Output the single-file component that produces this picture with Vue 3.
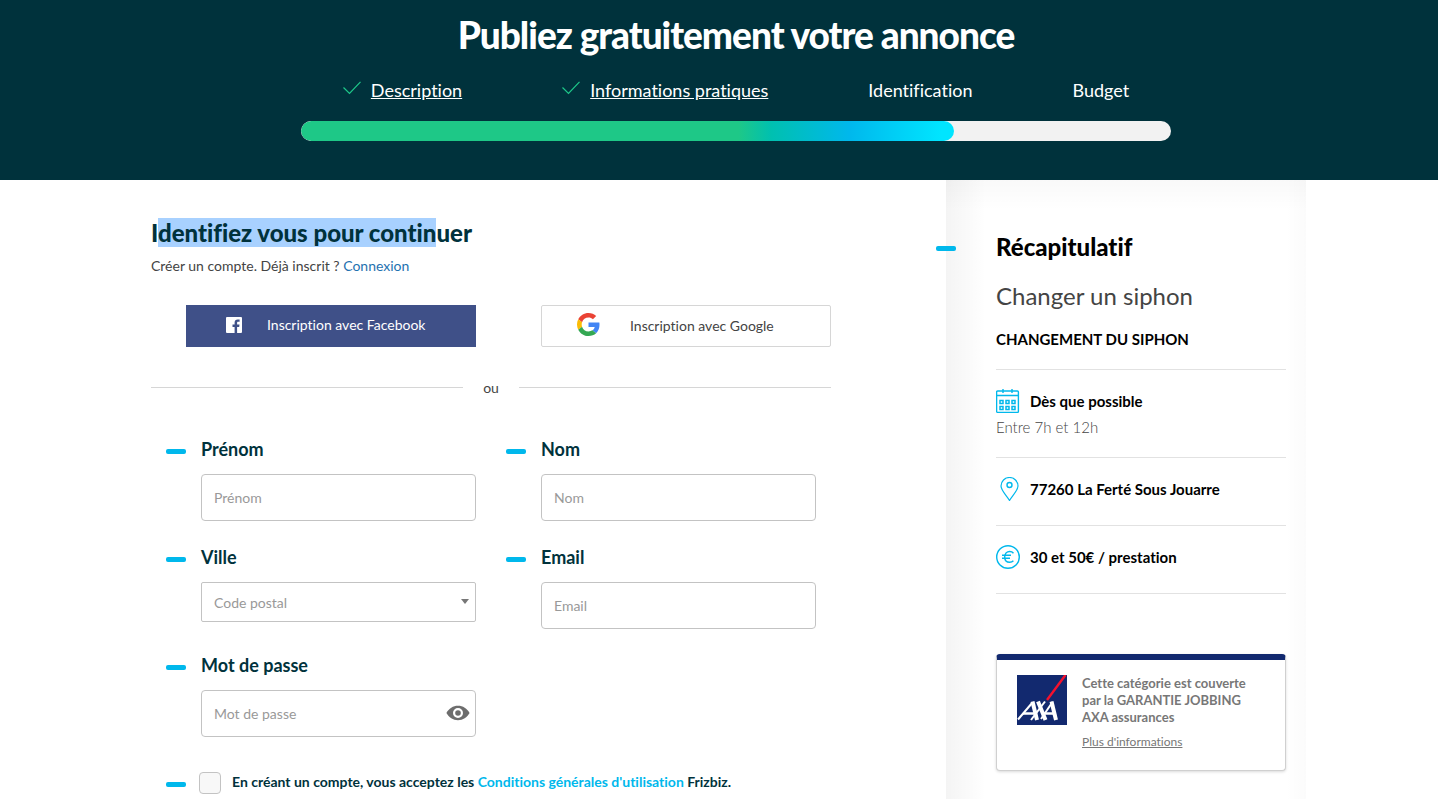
<script setup>
import { ref } from 'vue'

const steps = [
  { label: 'Description', done: true },
  { label: 'Informations pratiques', done: true },
  { label: 'Identification', done: false },
  { label: 'Budget', done: false }
]
const progress = 75
const showPassword = ref(false)
</script>

<template>
  <div class="page">
    <header class="hero">
      <h1>Publiez gratuitement votre annonce</h1>
      <ol class="steps">
        <li v-for="s in steps" :key="s.label">
          <svg v-if="s.done" class="check" viewBox="0 0 18 14" aria-hidden="true">
            <path d="M.5 6.5 6.500 12.500 17.500 .8" />
          </svg>
          <a v-if="s.done" href="#">{{ s.label }}</a>
          <span v-else>{{ s.label }}</span>
        </li>
      </ol>
      <div class="bar"><div class="fill" :style="{ width: progress + '%' }"></div></div>
    </header>

    <div class="shell">
      <main class="content">
        <h2>I<mark>dentifiez vous pour contin</mark>uer</h2>
        <p class="intro">Créer un compte. Déjà inscrit ? <a href="#">Connexion</a></p>

        <div class="social">
          <button type="button" class="facebook">
            <svg viewBox="0 0 16 16" aria-hidden="true">
              <path fill="#fff" d="M1 0h14a1 1 0 0 1 1 1v14a1 1 0 0 1-1 1h-3.900V9.900h2.100l.3-2.400h-2.400V6c0-.7.2-1.200 1.200-1.200h1.300V2.600c-.2 0-1-.1-1.900-.1-1.900 0-3.100 1.100-3.100 3.200v1.800H6.500v2.400h2.100V16H1a1 1 0 0 1-1-1V1a1 1 0 0 1 1-1z" />
            </svg>
            <span>Inscription avec Facebook</span>
          </button>
          <button type="button" class="google">
            <svg viewBox="0 0 48 48" aria-hidden="true">
              <path fill="#EA4335" d="M24 9.500c3.540 0 6.710 1.220 9.210 3.600l6.850-6.850C35.900 2.380 30.470 0 24 0 14.620 0 6.510 5.380 2.560 13.220l7.980 6.190C12.430 13.720 17.740 9.500 24 9.500z" />
              <path fill="#4285F4" d="M46.980 24.550c0-1.570-.15-3.090-.38-4.550H24v9.020h12.940c-.58 2.960-2.260 5.480-4.780 7.180l7.730 6c4.510-4.180 7.090-10.360 7.090-17.650z" />
              <path fill="#FBBC05" d="M10.530 28.590c-.48-1.450-.76-2.990-.76-4.590s.27-3.140.76-4.590l-7.980-6.190C.92 16.460 0 20.120 0 24s.92 7.540 2.560 10.780l7.970-6.190z" />
              <path fill="#34A853" d="M24 48c6.480 0 11.930-2.130 15.890-5.810l-7.730-6c-2.150 1.450-4.920 2.300-8.160 2.300-6.260 0-11.570-4.220-13.470-9.910l-7.980 6.190C6.510 42.620 14.620 48 24 48z" />
            </svg>
            <span>Inscription avec Google</span>
          </button>
        </div>

        <div class="or"><span>ou</span></div>

        <form @submit.prevent>
          <div class="fields">
            <div class="field">
              <label for="firstname">Prénom</label>
              <input id="firstname" type="text" placeholder="Prénom" />
            </div>
            <div class="field">
              <label for="lastname">Nom</label>
              <input id="lastname" type="text" placeholder="Nom" />
            </div>
            <div class="field">
              <label for="city">Ville</label>
              <div class="select">
                <select id="city"><option>Code postal</option></select>
                <svg viewBox="0 0 8 5" aria-hidden="true"><path d="M0 0h8L4 5z" fill="#777" /></svg>
              </div>
            </div>
            <div class="field">
              <label for="email">Email</label>
              <input id="email" type="email" placeholder="Email" />
            </div>
            <div class="field">
              <label for="password">Mot de passe</label>
              <div class="password">
                <input id="password" :type="showPassword ? 'text' : 'password'" placeholder="Mot de passe" />
                <button type="button" aria-label="Afficher le mot de passe" @click="showPassword = !showPassword">
                  <svg viewBox="0 0 24 16" aria-hidden="true">
                    <path fill="#6d6d6d" fill-rule="evenodd" d="M12 .8C17 .8 21 3.500 23.600 8 21 12.500 17 15.200 12 15.200S3 12.500.4 8C3 3.500 7 .8 12 .8zM12 3a5 5 0 1 0 0 10 5 5 0 0 0 0-10z" />
                    <circle cx="12" cy="8" r="2.800" fill="#6d6d6d" />
                  </svg>
                </button>
              </div>
            </div>
          </div>
          <div class="terms">
            <input id="terms" type="checkbox" />
            <label for="terms">En créant un compte, vous acceptez les <a href="#">Conditions générales d'utilisation</a> Frizbiz.</label>
          </div>
        </form>
      </main>

      <aside class="summary">
        <h2>Récapitulatif</h2>
        <p class="job">Changer un siphon</p>
        <h3>CHANGEMENT DU SIPHON</h3>
        <section class="when">
          <div class="line">
            <svg viewBox="0 0 24 24" fill="none" stroke="#00b8ec" aria-hidden="true">
              <rect x=".6" y="2" width="21.800" height="21.400" rx="1" stroke-width="1.400" />
              <path d="M.6 6.500h21.800M7 0v4M16 0v4" stroke-width="1.400" />
              <path d="M4 11.500h3v3H4zM10 11.500h3v3h-3zM16 11.500h3v3h-3zM4 17.500h3v3H4zM10 17.500h3v3h-3zM16 17.500h3v3h-3z" stroke-width="1.500" />
            </svg>
            <strong>Dès que possible</strong>
          </div>
          <p>Entre 7h et 12h</p>
        </section>
        <section>
          <div class="line">
            <svg viewBox="0 0 24 24" fill="none" stroke="#00b8ec" aria-hidden="true">
              <path d="M13.500 23.500C11 19 5 13.500 5 9a8.500 8.500 0 0 1 17 0c0 4.500-6 10-8.500 14.500z" stroke-width="1.200" />
              <circle cx="13.500" cy="8" r="2.500" stroke-width="1.400" />
            </svg>
            <strong>77260 La Ferté Sous Jouarre</strong>
          </div>
        </section>
        <section>
          <div class="line">
            <svg viewBox="0 0 24 24" fill="none" stroke="#00b8ec" aria-hidden="true">
              <circle cx="12" cy="12" r="11.300" stroke-width="1.400" />
              <path d="M17.500 8.200C16.500 7 15.200 6.500 13.700 6.500c-3 0-5 2.400-5 5.500s2 5.300 5 5.300c1.500 0 2.700-.5 3.700-1.600M6 10.300h9M6 13.300h8" stroke-width="1.400" />
            </svg>
            <strong>30 et 50€ / prestation</strong>
          </div>
        </section>

        <div class="insurance">
          <svg viewBox="0 0 50 50" role="img" aria-label="AXA">
            <path fill="#12296f" d="M0 0h50v50H0z" />
            <path d="M30 25 48.500 0" stroke="#f5112d" stroke-width="2.400" />
            <g fill="none" stroke="#fff">
              <path d="M1 44.500 15.500 27.500" stroke-width="2" />
              <path d="M15.500 26.500 20 45" stroke-width="4" />
              <path d="M6 38.500h13" stroke-width="2.500" />
              <path d="M21 26.500 28.500 45" stroke-width="4" />
              <path d="M28 26.500 14 45" stroke-width="2" />
              <path d="M24 44 35.500 27" stroke-width="2" />
              <path d="M34.500 26.500 39 45" stroke-width="4" />
              <path d="M26.500 38.500h11" stroke-width="2.500" />
            </g>
          </svg>
          <div>
            <strong>Cette catégorie est couverte par la GARANTIE JOBBING AXA assurances</strong>
            <a href="#">Plus d'informations</a>
          </div>
        </div>
      </aside>
    </div>
  </div>
</template>

<style>
body { margin: 0; background: #fff; }
</style>

<style scoped>
* { box-sizing: border-box; }
.page {
  min-height: 100vh;
  display: flex;
  flex-direction: column;
  font: 14px/20px Lato, "Liberation Sans", sans-serif;
  font-variant-ligatures: none;
  color: #444;
}
h1, h2, h3, p, ol { margin: 0; padding: 0; }
button, input, select { font: inherit; font-variant-ligatures: none; }
svg { display: block; flex: none; }

.hero {
  height: 180px;
  padding: 11px 0 0 34px;
  background: #00323c;
  color: #fff;
  display: flex;
  flex-direction: column;
  align-items: center;
}
h1 { font-size: 37px; line-height: 48px; font-weight: 900; letter-spacing: -1px; }
.steps {
  list-style: none;
  display: flex;
  gap: 100px;
  margin-top: 17px;
  font-size: 18px;
  line-height: 28px;
}
.steps li { display: flex; gap: 10px; }
.steps a { color: inherit; }
.check { width: 18px; height: 14px; margin-top: 5px; fill: none; stroke: #1dc98a; stroke-width: 1.2; }
.bar {
  width: 100%;
  max-width: 870px;
  height: 20px;
  margin-top: 17px;
  border-radius: 10px;
  background: #f2f2f2;
  overflow: hidden;
}
.fill {
  height: 100%;
  border-radius: 10px;
  background: linear-gradient(90deg, #1ec887 0%, #1ec887 67%, #00c0b0 72%, #00b8ec 84%, #00e5ff 98%);
}

.shell {
  flex: 1;
  width: 100%;
  max-width: 1174px;
  margin: 0 auto;
  padding-left: 4px;
  display: flex;
  justify-content: space-between;
}
.content { flex: 0 1 695px; padding: 38px 0 0 15px; }
.content h2 { font-size: 24px; line-height: 30px; font-weight: 900; color: #00323c; }
mark { background: #a8d1ff; color: inherit; }
.intro { margin-top: 8px; }
.intro a { color: #1f72b0; text-decoration: none; }

.social { display: flex; justify-content: space-between; margin: 29px 0 0 35px; }
.social button {
  flex: 0 1 290px;
  height: 42px;
  display: flex;
  align-items: center;
  border-radius: 2px;
}
.facebook { padding: 0 0 2px 40px; gap: 25px; border: 0; background: #3f5088; color: #fff; }
.social .facebook { border-radius: 0; }
.facebook svg { width: 16px; height: 16px; }
.google { padding: 0 0 0 35px; gap: 30px; border: 1px solid #d6d6d6; background: #fff; color: #444; }
.google svg { width: 23px; height: 23px; margin-bottom: 3px; }

.or { display: flex; gap: 20px; margin-top: 31px; }
.or::before, .or::after { content: ""; flex: 1; height: 1px; margin-top: 9px; background: #d6d6d6; }

form { margin-top: 38px; }
.fields { display: grid; grid-template-columns: 1fr 1fr; }
.field { position: relative; height: 108px; padding: 0 15px 0 50px; }
.field label { display: block; font-size: 18px; line-height: 26px; font-weight: 700; color: #00323c; }
.field::before, .terms::before, .summary h2::before {
  content: "";
  position: absolute;
  left: 15px;
  top: 13px;
  width: 20px;
  height: 5px;
  border-radius: 2px;
  background: #00b8ec;
}
.field input, .field select {
  display: block;
  width: 100%;
  height: 47px;
  padding: 0 12px;
  border: 1px solid #c3c3c3;
  border-radius: 4px;
  background: #fff;
  color: #999;
}
.field label + * { margin-top: 12px; }
input::placeholder { color: #999; opacity: 1; }
.field select { height: 40px; padding-top: 2px; appearance: none; border-radius: 2px; }
.select, .password { position: relative; }
.select svg { position: absolute; right: 7px; top: 17px; width: 8px; height: 5px; }
.password button {
  position: absolute;
  right: 6px;
  top: 15px;
  padding: 0;
  border: 0;
  background: none;
}
.password svg { width: 24px; height: 16px; }

.terms { position: relative; display: flex; gap: 11px; padding-left: 48px; margin-top: 12px; }
.terms::before { top: 10px; }
.terms input {
  appearance: none;
  flex: none;
  width: 22px;
  height: 22px;
  margin: 0;
  border: 1px solid #c3c3c3;
  border-radius: 4px;
  background: #f8f8f8;
}
.terms label { font-weight: 700; color: #00323c; }
.terms a { color: #00b8ec; text-decoration: none; }

.summary {
  flex: 0 0 360px;
  padding: 50px 20px 28px 50px;
  background:
    linear-gradient(90deg, rgba(0, 0, 0, .045), transparent 40px),
    linear-gradient(270deg, rgba(0, 0, 0, .015), transparent 20px),
    linear-gradient(180deg, rgba(0, 0, 0, .025), transparent 30px);
}
.summary h2 { position: relative; font-size: 24px; line-height: 34px; font-weight: 900; color: #000; }
.summary h2::before { left: -60px; top: 16px; }
.job { margin-top: 16px; font-size: 24px; line-height: 32px; }
h3 { margin-top: 16px; padding-bottom: 19px; border-bottom: 1px solid #e2e2e2; font-size: 15px; line-height: 22px; font-weight: 700; color: #000; }
section { padding: 18px 0 23px; border-bottom: 1px solid #e2e2e2; font-size: 15px; }
.line { display: flex; align-items: center; gap: 10px; height: 26px; }
.line svg { width: 24px; height: 24px; }
.line strong { color: #000; }
.when { padding: 18px 0 17px; }
.when p { line-height: 26px; font-weight: 300; }

.insurance {
  display: flex;
  gap: 15px;
  margin-top: 60px;
  padding: 15px 30px 18px 20px;
  border: 1px solid #d0d0d0;
  border-top: 6px solid #12296f;
  border-radius: 4px;
  background: #fff;
  box-shadow: 0 1px 3px rgba(0, 0, 0, .15);
  color: #777;
}
.insurance svg { width: 50px; height: 50px; }
.insurance strong { display: block; font-size: 13px; line-height: 17px; }
.insurance a { display: block; margin-top: 6px; font-size: 12px; line-height: 20px; color: inherit; }
</style>
